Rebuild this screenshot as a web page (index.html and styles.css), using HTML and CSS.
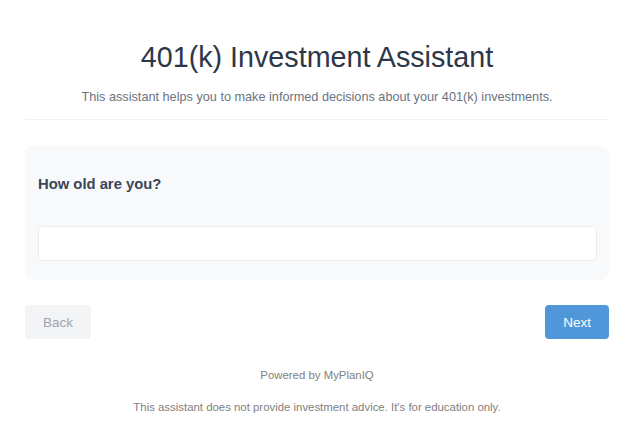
FILE: index.html
```html
<!DOCTYPE html>
<html lang="en">
<head>
  <meta charset="UTF-8" />
  <meta name="viewport" content="width=device-width, initial-scale=1.0" />
  <title>401(k) Investment Assistant</title>
  <link rel="stylesheet" href="styles.css">
</head>
<body>

<div class="wrapper">
  <header class="header">
    <h1>401(k) Investment Assistant</h1>
    <p class="subtitle">This assistant helps you to make informed decisions about your 401(k) investments.</p>
  </header>

  <div class="question-card">
    <label for="answer" class="question">How old are you?</label>
    <input type="text" id="answer" class="answer-input">
  </div>

  <div class="nav-buttons">
    <button class="btn btn-back">Back</button>
    <button class="btn btn-next">Next</button>
  </div>

  <footer class="footer">
    <p class="powered">Powered by MyPlanIQ</p>
    <p class="disclaimer">This assistant does not provide investment advice. It's for education only.</p>
  </footer>
</div>

</body>
</html>
```

FILE: styles.css
```css
body {
  font-family: 'Liberation Sans', Arial, sans-serif;
  background: #fff;
  margin: 0;
  padding: 0;
}
.wrapper {
  padding: 0 21px 0 25px;
}
.header {
  text-align: center;
  padding-top: 39px;
  padding-bottom: 15px;
  border-bottom: 1px solid #f0f1f3;
}
h1 {
  margin: 0;
  font-size: 28.7px;
  font-weight: normal;
  color: #2d3748;
  line-height: 36px;
}
.subtitle {
  margin: 15px 0 0;
  font-size: 12.7px;
  color: #6b7280;
}
.question-card {
  margin-top: 26px;
  background: #f8f9fa;
  border-radius: 8px;
  padding: 29px 12px 19px 13px;
}
.question {
  display: block;
  font-size: 14.8px;
  font-weight: bold;
  color: #3a4556;
  line-height: 18px;
}
.answer-input {
  display: block;
  width: 100%;
  box-sizing: border-box;
  margin-top: 33px;
  height: 35px;
  border: 1px solid #ebedf0;
  border-radius: 5px;
  background: #fff;
}
.nav-buttons {
  display: flex;
  justify-content: space-between;
  margin-top: 25px;
}
.btn {
  font-family: inherit;
  font-size: 13.5px;
  height: 34px;
  border: none;
  border-radius: 4px;
  padding: 0 18px;
}
.btn-back {
  background: #f3f4f6;
  color: #9ca3af;
}
.btn-next {
  background: #5097da;
  color: #fff;
}
.footer {
  text-align: center;
  margin-top: 30px;
}
.powered {
  margin: 0;
  font-size: 11.4px;
  color: #808080;
}
.disclaimer {
  margin: 20px 0 0;
  font-size: 11.4px;
  color: #808080;
}
```
